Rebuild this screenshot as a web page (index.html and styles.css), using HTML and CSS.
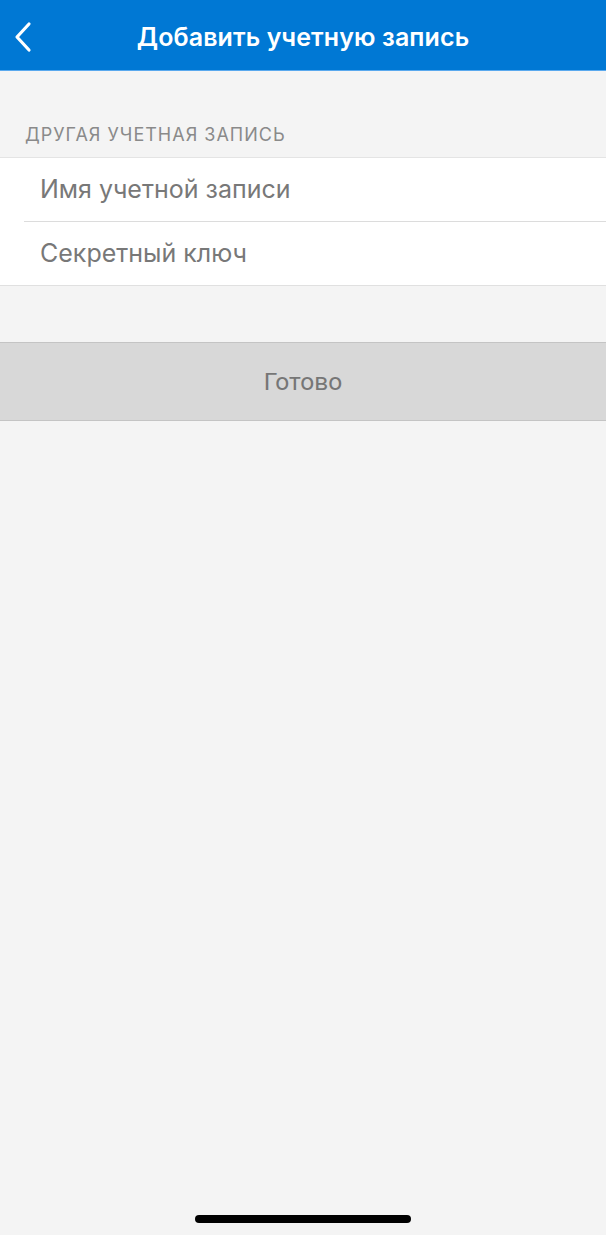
FILE: index.html
```html
<!DOCTYPE html>
<html lang="ru">
<head>
	<meta charset="UTF-8" />
	<title>Добавить учетную запись</title>
	<meta name="viewport" content="width=device-width, initial-scale=1.0"/>
	<link rel="stylesheet" href="styles.css">
</head>
<body>
	<div class="screen">
		<!-- Header -->
		<div class="header">
			<a class="back" href="#">
				<svg width="20" height="32" viewBox="0 0 20 32">
					<path d="M16 3 L4 16 L16 29" fill="none" stroke="#ffffff" stroke-width="3.2" stroke-linecap="round" stroke-linejoin="round"/>
				</svg>
			</a>
			<div class="title">Добавить учетную запись</div>
		</div>

		<!-- Form -->
		<div class="section-label">ДРУГАЯ УЧЕТНАЯ ЗАПИСЬ</div>
		<div class="group">
			<div class="row">
				<input class="field" type="text" placeholder="Имя учетной записи">
			</div>
			<div class="row">
				<input class="field" type="text" placeholder="Секретный ключ">
			</div>
		</div>

		<button class="done" type="button">Готово</button>

		<div class="spacer"></div>
		<div class="home-bar"></div>
	</div>
</body>
</html>
```

FILE: styles.css
```css
	html, body{
		margin: 0;
		padding: 0;
		background: #f4f4f4;
	}

	body{
		font-family: Inter, "Noto Sans", sans-serif;
	}

	.screen{
		display: flex;
		flex-direction: column;
		height: 1235px;
	}

	.header{
		position: relative;
		display: flex;
		align-items: center;
		justify-content: center;
		height: 70px;
		background: #0078d4;
		border-bottom: 1px solid #5aa9ee;
	}

	.back{
		position: absolute;
		left: 13px;
		top: 21px;
		display: block;
		width: 20px;
		height: 32px;
	}

	.title{
		color: #ffffff;
		font-size: 25px;
		font-weight: 600;
		letter-spacing: 0.1px;
		padding-top: 4px;
	}

	.section-label{
		padding: 53px 0 0 25px;
		height: 33px;
		font-size: 18px;
		color: #8a8a8a;
		letter-spacing: 1px;
	}

	.group{
		background: #ffffff;
		border-top: 1px solid #e4e4e4;
		border-bottom: 1px solid #e0e0e0;
	}

	.row{
		height: 63px;
		margin-left: 24px;
		display: flex;
		align-items: center;
	}

	.row + .row{
		border-top: 1px solid #dcdcdc;
	}

	.field{
		border: none;
		outline: none;
		background: transparent;
		padding: 0 0 2px 16px;
		width: 100%;
		font-family: Inter, "Noto Sans", sans-serif;
		font-size: 25px;
		color: #404040;
	}

	.field::placeholder{
		color: #787878;
	}

	.done{
		margin-top: 56px;
		height: 79px;
		border: none;
		border-top: 1px solid #c4c4c4;
		border-bottom: 1px solid #c4c4c4;
		background: #d8d8d8;
		font-family: Roboto, sans-serif;
		font-size: 24.5px;
		color: #767676;
		padding: 0;
	}

	.spacer{
		flex: 1;
	}

	.home-bar{
		align-self: center;
		width: 216px;
		height: 8px;
		border-radius: 4px;
		background: #000000;
		margin-bottom: 12px;
	}
```
